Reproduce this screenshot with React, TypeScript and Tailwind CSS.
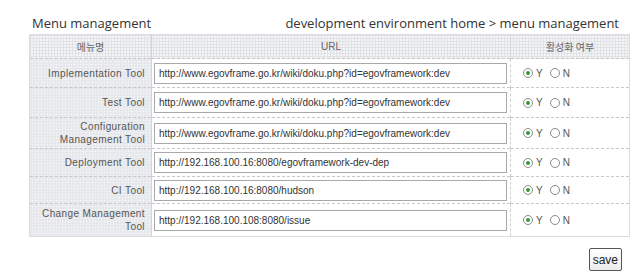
import React from 'react';

type Row = { name: string[]; url: string; h: string };

const ROWS: Row[] = [
  { name: ['Implementation Tool'], url: 'http://www.egovframe.go.kr/wiki/doku.php?id=egovframework:dev', h: 'h-[29px]' },
  { name: ['Test Tool'], url: 'http://www.egovframe.go.kr/wiki/doku.php?id=egovframework:dev', h: 'h-[30px]' },
  { name: ['Configuration', 'Management Tool'], url: 'http://www.egovframe.go.kr/wiki/doku.php?id=egovframework:dev', h: 'h-[31px]' },
  { name: ['Deployment Tool'], url: 'http://192.168.100.16:8080/egovframework-dev-dep', h: 'h-[28px]' },
  { name: ['CI Tool'], url: 'http://192.168.100.16:8080/hudson', h: 'h-[27px]' },
  { name: ['Change Management', 'Tool'], url: 'http://192.168.100.108:8080/issue', h: 'h-[33px]' },
];

// fine grey grid used behind header and first column
const grid =
  'bg-[#f4f5f7] bg-[linear-gradient(#e0e2e6_1px,transparent_1px),linear-gradient(90deg,#e0e2e6_1px,transparent_1px)] bg-[size:3px_3px]';

const Radio = ({ checked, label }: { checked?: boolean; label: string }) => (
  <span className="flex items-center gap-[3px]">
    <span className="w-[10px] h-[10px] rounded-full border border-[#8a8a8a] bg-white flex items-center justify-center">
      {checked && <span className="w-[4px] h-[4px] rounded-full bg-[#2f9a3a]" />}
    </span>
    <span className="text-[10px] text-[#555]">{label}</span>
  </span>
);

const App: React.FC = () => {
  return (
    <div className="w-[639px] h-[280px] bg-white font-['Liberation_Sans','Noto_Sans_CJK_KR',sans-serif]">
      <div className="flex items-end justify-between pl-[32px] pr-[20px] pt-[12px] h-[33px] text-[13px] text-[#333] font-['Open_Sans',sans-serif]">
        <span>Menu management</span>
        <span>development environment home &gt; menu management</span>
      </div>

      <table className="ml-[29px] mt-[1px] w-[600px] border-collapse table-fixed border border-[#dcdcdc]">
        <colgroup>
          <col className="w-[122px]" />
          <col className="w-[359px]" />
          <col className="w-[119px]" />
        </colgroup>
        <thead>
          <tr className={`h-[24px] ${grid} text-[10px] text-[#666]`}>
            <th className="font-normal border-r border-[#d4d4d4] font-['Noto_Sans_CJK_KR',sans-serif]">메뉴명</th>
            <th className="font-normal border-r border-[#d4d4d4]">URL</th>
            <th className="font-normal font-['Noto_Sans_CJK_KR',sans-serif]">활성화 여부</th>
          </tr>
        </thead>
        <tbody>
          {ROWS.map((r, i) => (
            <tr key={i} className={`${r.h} border-t border-dashed border-[#c8c8c8]`}>
              <td className={`${grid} text-right pr-[6px] text-[10px] tracking-[0.4px] leading-[13px] text-[#555] border-r border-[#d4d4d4]`}>
                {r.name.map((n, j) => (
                  <div key={j}>{n}</div>
                ))}
              </td>
              <td className="pl-[2px] pr-[3px] border-r border-dashed border-[#d0d0d0]">
                <div className="h-[21px] border border-[#a9a9a9] bg-white flex items-center pl-[4px] text-[10px] text-[#333] whitespace-nowrap overflow-hidden">
                  {r.url}
                </div>
              </td>
              <td className="pl-[12px]">
                <div className="flex items-center gap-[7px]">
                  <Radio checked label="Y" />
                  <Radio label="N" />
                </div>
              </td>
            </tr>
          ))}
        </tbody>
      </table>

      <div className="flex justify-end pr-[17px] mt-[11px]">
        <button className="h-[23px] px-[3px] border border-[#555] rounded-[2px] bg-[linear-gradient(#ffffff,#ececec)] text-[12px] text-[#222] leading-none">
          save
        </button>
      </div>
    </div>
  );
};

export default App;
